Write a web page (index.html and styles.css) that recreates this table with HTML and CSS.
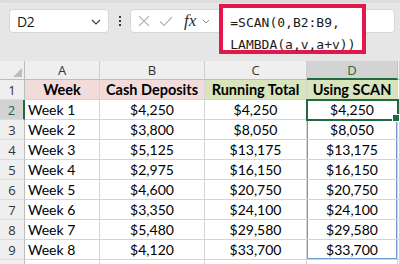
FILE: index.html
```html
<!DOCTYPE html>
<html>
<head>
<meta charset="utf-8">
<link rel="stylesheet" href="styles.css">
</head>
<body>
<div class="app">
  <div class="topstrip"></div>
  <div class="toolbar">
    <div class="namebox">
      <span class="ref">D2</span>
      <svg class="chev" width="10" height="6" viewBox="0 0 10 6"><path d="M1 1 L5 5 L9 1" fill="none" stroke="#404040" stroke-width="1.2"/></svg>
    </div>
    <div class="dots"><span></span><span></span><span></span></div>
    <div class="fbox">
      <svg class="ico" width="12" height="12" viewBox="0 0 12 12"><path d="M1 1 L11 11 M11 1 L1 11" stroke="#b4b4b4" stroke-width="1.1" fill="none"/></svg>
      <svg class="ico chk" width="14" height="11" viewBox="0 0 14 11"><path d="M1 5.5 L5 9.5 L13 1" stroke="#b4b4b4" stroke-width="1.1" fill="none"/></svg>
      <span class="fx">fx</span>
      <svg class="ico fchev" width="8" height="5" viewBox="0 0 8 5"><path d="M1 1 L4 4 L7 1" fill="none" stroke="#8a8a8a" stroke-width="1"/></svg>
      <div class="formula">=SCAN(0,B2:B9,<br>LAMBDA(a,v,a+v))</div>
    </div>
  </div>
  <div class="sheet">
    <div class="corner"></div>
    <div class="ch">A</div><div class="ch">B</div><div class="ch">C</div><div class="ch ch-sel">D</div><div class="ch"></div>

    <div class="rh">1</div>
    <div class="c hd pink">Week</div><div class="c hd pink">Cash Deposits</div><div class="c hd green">Running Total</div><div class="c hd green">Using SCAN</div><div class="c"></div>

    <div class="rh rh-sel">2</div>
    <div class="c l">Week 1</div><div class="c">$4,250</div><div class="c">$4,250</div><div class="c sp sel">$4,250</div><div class="c"></div>

    <div class="rh">3</div>
    <div class="c l">Week 2</div><div class="c">$3,800</div><div class="c">$8,050</div><div class="c sp">$8,050</div><div class="c"></div>

    <div class="rh">4</div>
    <div class="c l">Week 3</div><div class="c">$5,125</div><div class="c">$13,175</div><div class="c sp">$13,175</div><div class="c"></div>

    <div class="rh">5</div>
    <div class="c l">Week 4</div><div class="c">$2,975</div><div class="c">$16,150</div><div class="c sp">$16,150</div><div class="c"></div>

    <div class="rh">6</div>
    <div class="c l">Week 5</div><div class="c">$4,600</div><div class="c">$20,750</div><div class="c sp">$20,750</div><div class="c"></div>

    <div class="rh">7</div>
    <div class="c l">Week 6</div><div class="c">$3,350</div><div class="c">$24,100</div><div class="c sp">$24,100</div><div class="c"></div>

    <div class="rh">8</div>
    <div class="c l">Week 7</div><div class="c">$5,480</div><div class="c">$29,580</div><div class="c sp">$29,580</div><div class="c"></div>

    <div class="rh">9</div>
    <div class="c l">Week 8</div><div class="c">$4,120</div><div class="c">$33,700</div><div class="c sp last">$33,700</div><div class="c"></div>

    <div class="rh"></div>
    <div class="c"></div><div class="c"></div><div class="c"></div><div class="c"></div><div class="c"></div>
  </div>
</div>
</body>
</html>
```

FILE: styles.css
```css
* { box-sizing: border-box; }
html, body { margin: 0; padding: 0; }
body {
  width: 400px;
  height: 264px;
  overflow: hidden;
  background: #e6e6e6;
  font-family: Lato, "Liberation Sans", sans-serif;
}
.app { width: 400px; height: 264px; overflow: hidden; }

.topstrip {
  height: 4px;
  background: #dcdcdc;
  border-bottom: 1px dotted #f2f2f2;
}

.toolbar {
  height: 57px;
  display: flex;
  align-items: flex-start;
  padding-top: 5px;
}

.namebox {
  margin-left: 9px;
  width: 100px;
  height: 24px;
  background: #fff;
  border: 1px solid #d6d6d6;
  border-radius: 4px;
  display: flex;
  align-items: center;
  justify-content: space-between;
  padding: 0 7px 0 7px;
}
.ref {
  font-family: "Open Sans", "Noto Sans", sans-serif;
  font-size: 14px;
  color: #1a1a1a;
  letter-spacing: -0.3px;
}
.chev { margin-top: 1px; }

.dots {
  width: 21px;
  height: 24px;
  display: flex;
  flex-direction: column;
  align-items: center;
  justify-content: center;
  gap: 2px;
}
.dots span {
  width: 2px;
  height: 2px;
  background: #3a3a3a;
}

.fbox {
  width: 265px;
  height: 24px;
  background: #fff;
  border: 1px solid #d6d6d6;
  border-radius: 4px;
  display: flex;
  align-items: center;
  padding-left: 7px;
}
.ico { flex: none; }
.chk { margin-left: 9px; }
.fx {
  margin-left: 11px;
  font-family: "Liberation Serif", serif;
  font-style: italic;
  font-size: 17px;
  color: #2b2b2b;
  line-height: 1;
  margin-top: -2px;
}
.fchev { margin-left: 6px; }

.formula {
  align-self: flex-start;
  margin-top: -6px;
  margin-left: 9px;
  width: 147px;
  height: 50px;
  flex: none;
  background: #fff;
  border: 4px solid #e3174b;
  padding: 4px 0 0 7px;
  font-family: "DejaVu Sans Mono", "Liberation Mono", monospace;
  font-size: 13px;
  line-height: 22px;
  color: #1a1a1a;
  white-space: nowrap;
  position: relative;
  z-index: 2;
}

.sheet {
  display: grid;
  grid-template-columns: 25px 75px 105px 102px 91px 2px;
  grid-template-rows: 19px repeat(10, 20px);
  background: #fff;
  font-size: 14px;
  color: #000;
}

.corner {
  background: #efefef;
  border-right: 1px solid #bdbdbd;
  border-bottom: 1px solid #bdbdbd;
  position: relative;
}
.corner::after {
  content: "";
  position: absolute;
  right: 2px;
  bottom: 2px;
  width: 0;
  height: 0;
  border-left: 9px solid transparent;
  border-bottom: 9px solid #bdbdbd;
}

.ch {
  background: #efefef;
  border-right: 1px solid #d0d0d0;
  border-bottom: 1px solid #bdbdbd;
  display: flex;
  align-items: center;
  justify-content: center;
  font-family: "Open Sans", "Noto Sans", sans-serif;
  font-size: 13px;
  color: #333;
}
.ch-sel {
  background: #d3d3d3;
  color: #1e6b41;
  border-bottom: 2px solid #1e6b41;
  border-right: 1px solid #c0c0c0;
}

.rh {
  background: #efefef;
  border-right: 1px solid #bdbdbd;
  border-bottom: 1px solid #dadada;
  display: flex;
  align-items: center;
  justify-content: center;
  font-family: "Open Sans", "Noto Sans", sans-serif;
  font-size: 13px;
  color: #333;
}
.rh-sel {
  background: #d3d3d3;
  color: #1e6b41;
  border-right: 2px solid #1e6b41;
}

.c {
  border-right: 1px solid #d4d4d4;
  border-bottom: 1px solid #d4d4d4;
  display: flex;
  align-items: center;
  justify-content: center;
  white-space: nowrap;
  overflow: visible;
  position: relative;
}
.c.l { justify-content: flex-start; padding-left: 3px; }
.hd { font-weight: bold; font-size: 14.5px; }
.pink { background: #f2dcdb; }
.green { background: #d8e4bc; }

.sp {
  box-shadow: inset 1px 0 #6b9ad6, inset -1px 0 #6b9ad6;
}
.sp.last {
  box-shadow: inset 1px 0 #6b9ad6, inset -1px 0 #6b9ad6, inset 0 -1px #6b9ad6;
}
.sel {
  box-shadow: none;
  outline: 2px solid #1e6b41;
  outline-offset: -1px;
  z-index: 1;
}
.sel::after {
  content: "";
  position: absolute;
  right: -3px;
  bottom: -3px;
  width: 6px;
  height: 6px;
  background: #1e6b41;
  border: 1px solid #fff;
}
```
